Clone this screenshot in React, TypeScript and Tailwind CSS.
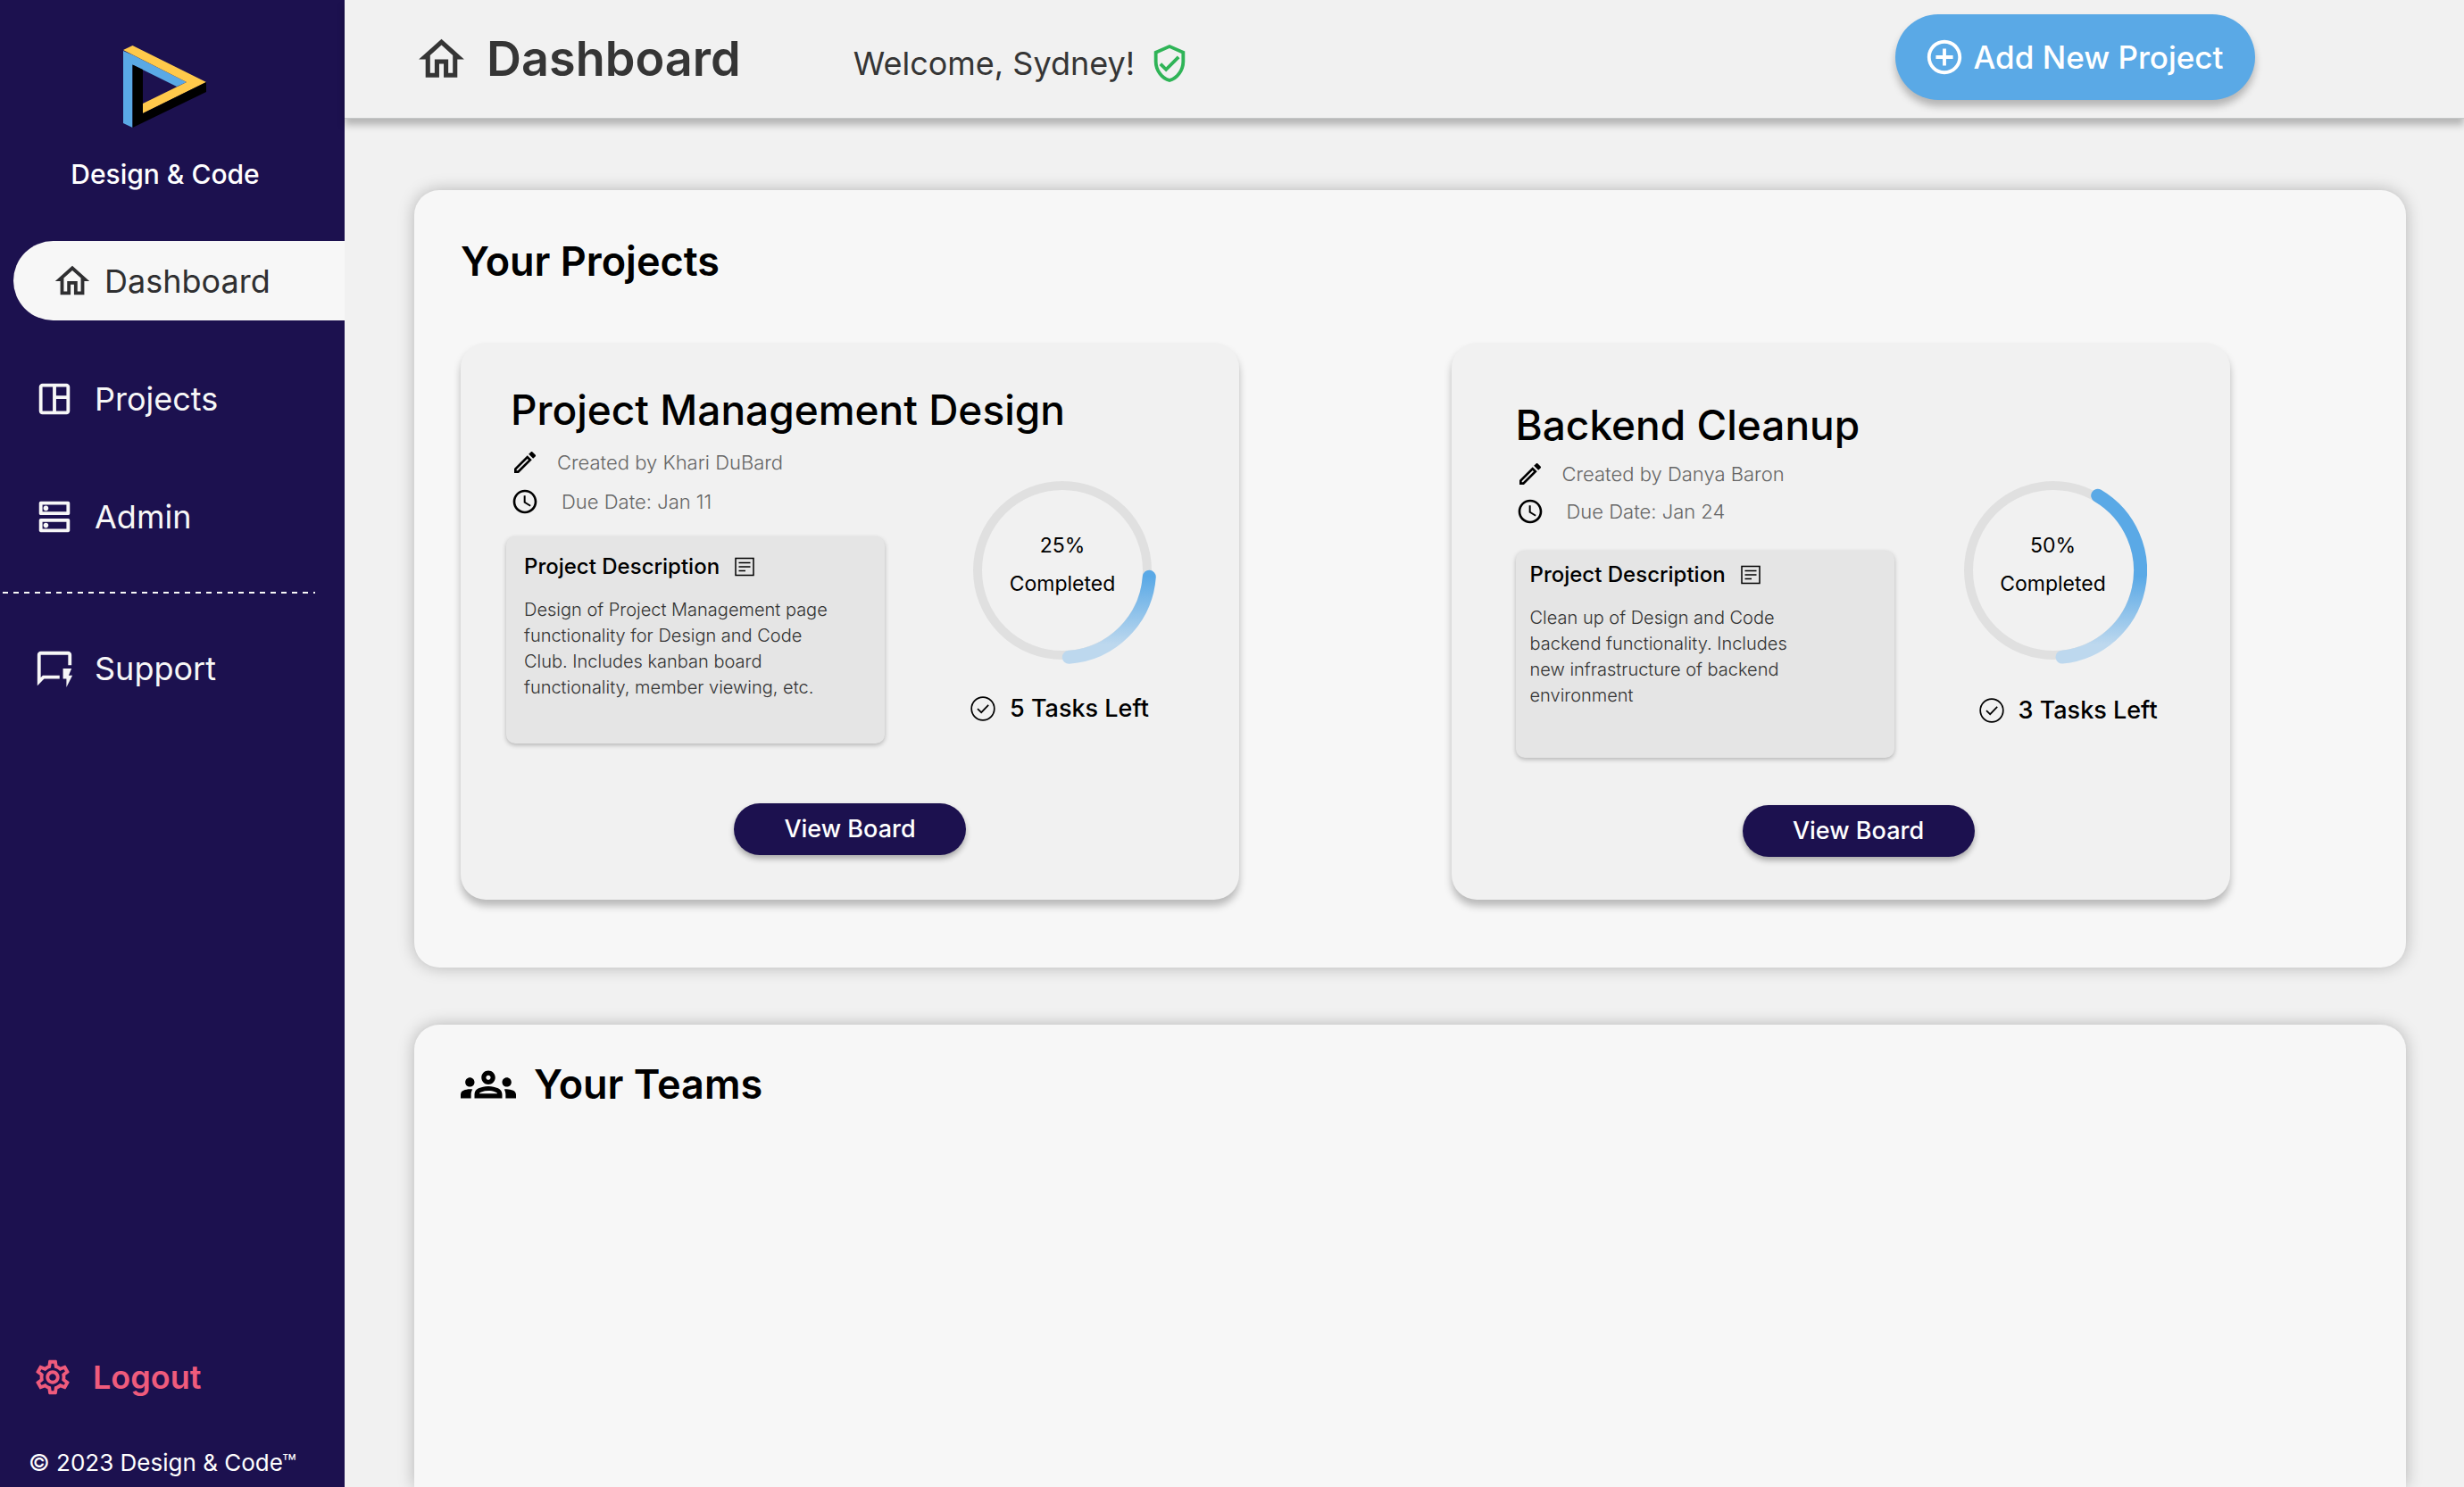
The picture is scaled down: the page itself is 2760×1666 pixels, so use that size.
import type { ReactNode } from 'react';
import {
  MdOutlineHome,
  MdOutlineSpaceDashboard,
  MdOutlineDns,
  MdOutlineQuickreply,
  MdOutlineSettings,
  MdOutlineVerifiedUser,
  MdAddCircleOutline,
  MdOutlineEdit,
  MdSchedule,
  MdOutlineGroups,
} from 'react-icons/md';

function Logo() {
  return (
    <svg className="h-[93px] w-[94px]" viewBox="0 0 94 93" aria-hidden="true">
      <path d="M0 6 10.5 10.5 71 41 60 46 10.5 21.5V92L0 87Z" fill="#5aa9e6" />
      <path d="M0 5 10.5 0 93 41 22 76V65L71 41Z" fill="#ffc94b" />
      <path d="M10.5 21.5 22 27V76L93 41V52L10.5 92Z" fill="#000" />
    </svg>
  );
}

function ArticleIcon() {
  return (
    <svg className="size-6" viewBox="0 0 24 24" fill="none" stroke="currentColor" aria-hidden="true">
      <path d="M2 2.5H22V21.5H2Z" strokeWidth="1.5" />
      <path d="M5.5 7.5H18.5M5.5 12H18.5M5.5 16.5H13" strokeWidth="1.5" />
    </svg>
  );
}

function CheckIcon() {
  return (
    <svg
      className="size-7 shrink-0"
      viewBox="0 0 28 28"
      fill="none"
      stroke="currentColor"
      strokeWidth="1.7"
      aria-hidden="true"
    >
      <circle cx="14" cy="14" r="12.8" />
      <path d="M8 14.2 12.2 18.2 20.2 9.8" />
    </svg>
  );
}

type NavItemProps = { icon: ReactNode; label: string };

function NavItem({ icon, label }: NavItemProps) {
  return (
    <a href="#" className="flex h-[89px] items-center gap-[22px] pl-[38px] text-4xl text-[#f7f7f7]">
      {icon}
      {label}
    </a>
  );
}

function Sidebar() {
  return (
    <aside className="flex w-[386px] shrink-0 flex-col bg-[#1c114f] text-white">
      <div className="flex flex-col items-center pt-[51px] pr-4">
        <Logo />
        <p className="mt-[30px] text-[30px] leading-[42px] font-medium">Design &amp; Code</p>
      </div>
      <nav className="mt-[54px] flex flex-col gap-[43px]">
        <a
          href="#"
          aria-current="page"
          className="ml-[15px] flex h-[89px] items-center gap-[13px] rounded-l-full bg-[#f7f7f7] pl-[43px] text-4xl text-[#2f2f31]"
        >
          <MdOutlineHome className="size-[46px]" />
          Dashboard
        </a>
        <NavItem icon={<MdOutlineSpaceDashboard className="size-[46px]" />} label="Projects" />
        <NavItem icon={<MdOutlineDns className="size-[46px]" />} label="Admin" />
      </nav>
      <div className="mt-10 mr-[33px] ml-[3px] h-[2px] bg-[repeating-linear-gradient(to_right,#f7f7f7_0_6px,transparent_6px_12px)]" />
      <div className="mt-[39px]">
        <NavItem icon={<MdOutlineQuickreply className="size-[46px]" />} label="Support" />
      </div>
      <button
        type="button"
        className="mt-auto flex h-[58px] items-center gap-[22px] pl-9 text-left text-4xl font-semibold text-[#ef5b7c]"
      >
        <MdOutlineSettings className="size-[46px]" />
        Logout
      </button>
      <p className="mt-[49px] mb-[9px] pl-8 text-[26px] leading-9">© 2023 Design &amp; Code™</p>
    </aside>
  );
}

function Header() {
  return (
    <header className="z-10 flex h-[133px] shrink-0 items-center border-b border-[#c4c7c7] bg-[#f1f1f1] pr-[234px] pl-[78px] text-[#353535] shadow-[0_7px_8px_rgba(0,0,0,0.25)]">
      <MdOutlineHome className="size-[61px]" />
      <h1 className="ml-5 text-[54px] leading-[64px] font-semibold">Dashboard</h1>
      <p className="mt-[10px] ml-[126px] flex items-center gap-4 text-4xl whitespace-nowrap">
        Welcome, Sydney!
        <MdOutlineVerifiedUser className="size-[46px] text-[#2fb457]" />
      </p>
      <button
        type="button"
        className="mb-1 ml-auto flex h-24 w-[403px] items-center justify-center gap-[10px] rounded-full bg-[#5aa9e6] pr-1 text-[35px] font-medium whitespace-nowrap text-white shadow-[0_7px_8px_rgba(0,0,0,0.25)]"
      >
        <MdAddCircleOutline className="size-[46px]" />
        Add New Project
      </button>
    </header>
  );
}

type ProgressRingProps = { id: string; percent: number; arc: string };

function ProgressRing({ id, percent, arc }: ProgressRingProps) {
  return (
    <div className="grid size-[210px] place-items-center">
      <svg className="col-start-1 row-start-1 size-[210px]" viewBox="0 0 210 210" fill="none" aria-hidden="true">
        <defs>
          <linearGradient id={id} x1="0" y1="112" x2="0" y2="188" gradientUnits="userSpaceOnUse">
            <stop stopColor="#5aa9e6" />
            <stop offset="1" stopColor="#bdd8ee" />
          </linearGradient>
        </defs>
        <circle cx="105" cy="105" r="95" stroke="#e0e0e0" strokeWidth="10" />
        <path d={arc} stroke={`url(#${id})`} strokeWidth="15" strokeLinecap="round" />
      </svg>
      <p className="col-start-1 row-start-1 pb-3 text-center text-[23px] leading-[43px] text-black">
        {percent}%<br />
        Completed
      </p>
    </div>
  );
}

type Project = {
  id: string;
  title: string;
  author: string;
  due: string;
  description: string;
  percent: number;
  arc: string;
  tasksLeft: number;
  layout: {
    title: string;
    body: string;
    meta: string;
    panel: string;
    side: string;
    tasks: string;
    action: string;
  };
};

const projects: Project[] = [
  {
    id: 'management',
    title: 'Project Management Design',
    author: 'Khari DuBard',
    due: 'Jan 11',
    description:
      'Design of Project Management page functionality for Design and Code Club. Includes kanban board functionality, member viewing, etc.',
    percent: 25,
    arc: 'M112.3 202.3A97.5 97.5 0 0 0 202.3 112.3',
    tasksLeft: 5,
    layout: {
      title: 'mt-12 ml-14',
      body: 'pl-[51px]',
      meta: 'mt-2 mb-[17px] pl-[5px] leading-[44px]',
      panel: 'pt-[14px] pr-[54px] pl-5',
      side: 'pt-[46px]',
      tasks: 'mt-[30px] ml-[2px]',
      action: 'mt-[67px]',
    },
  },
  {
    id: 'backend',
    title: 'Backend Cleanup',
    author: 'Danya Baron',
    due: 'Jan 24',
    description:
      'Clean up of Design and Code backend functionality. Includes new infrastructure of backend environment',
    percent: 50,
    arc: 'M115 202.1A97.5 97.5 0 0 0 154.7 21.2',
    tasksLeft: 3,
    layout: {
      title: 'mt-[65px] ml-[72px]',
      body: 'pl-[72px]',
      meta: 'mt-[5px] mb-[23px] leading-[42px]',
      panel: 'pt-[7px] pr-[88px] pl-4',
      side: 'pt-[29px]',
      tasks: 'mt-8 ml-[22px]',
      action: 'mt-[53px] ml-10',
    },
  },
];

function ProjectCard({ project }: { project: Project }) {
  const { layout } = project;
  return (
    <article className="flex max-w-[872px] flex-col rounded-[28px] bg-[#f1f1f1] pb-12 shadow-[0_7px_8px_rgba(0,0,0,0.25)]">
      <h3 className={`h-14 text-[46px] leading-[54px] font-medium whitespace-nowrap ${layout.title}`}>
        {project.title}
      </h3>
      <div className={`flex items-start justify-between pr-[93px] ${layout.body}`}>
        <div className="w-[424px]">
          <div className={`text-[22px] font-light text-[#666] ${layout.meta}`}>
            <p className="flex items-center gap-5">
              <MdOutlineEdit className="size-8 text-black" />
              Created by {project.author}
            </p>
            <p className="flex items-center gap-[25px]">
              <MdSchedule className="size-8 text-black" />
              Due Date: {project.due}
            </p>
          </div>
          <section className={`h-[232px] rounded-[10px] bg-[#e5e5e5] shadow-[0_2px_5px_rgba(0,0,0,0.25)] ${layout.panel}`}>
            <h4 className="flex items-center gap-4 text-2xl leading-10 font-medium whitespace-nowrap">
              Project Description
              <ArticleIcon />
            </h4>
            <p className="mt-[14px] text-xl leading-[29px] font-light text-[#333]">{project.description}</p>
          </section>
        </div>
        <div className={`w-[210px] ${layout.side}`}>
          <ProgressRing id={`ring-${project.id}`} percent={project.percent} arc={project.arc} />
          <p className={`flex items-center gap-4 text-[27px] leading-10 font-medium whitespace-nowrap ${layout.tasks}`}>
            <CheckIcon />
            {project.tasksLeft} Tasks Left
          </p>
        </div>
      </div>
      <button
        type="button"
        className={`h-[58px] w-[260px] self-center rounded-full bg-[#1c114f] text-[27px] font-medium text-white shadow-[0_4px_6px_rgba(0,0,0,0.3)] ${layout.action}`}
      >
        View Board
      </button>
    </article>
  );
}

export default function App() {
  return (
    <div className="flex min-h-screen bg-[#f1f1f1] font-['Inter',sans-serif] text-black">
      <Sidebar />
      <div className="flex min-w-0 flex-1 flex-col">
        <Header />
        <main className="flex flex-1 flex-col gap-16 pt-20 pr-[65px] pl-[78px]">
          <section className="rounded-[28px] bg-[#f7f7f7] pt-[50px] pb-[76px] pl-[52px] shadow-[0_0_18px_rgba(0,0,0,0.25)]">
            <h2 className="text-[45px] leading-[60px] font-semibold">Your Projects</h2>
            <div className="mt-[61px] grid grid-cols-2 gap-10">
              {projects.map((project) => (
                <ProjectCard key={project.id} project={project} />
              ))}
            </div>
          </section>
          <section className="flex-1 rounded-t-[28px] bg-[#f7f7f7] pt-9 pl-[52px] shadow-[0_0_18px_rgba(0,0,0,0.25)]">
            <h2 className="flex items-center gap-5 text-[45px] leading-[60px] font-semibold">
              <MdOutlineGroups className="size-[62px]" />
              Your Teams
            </h2>
          </section>
        </main>
      </div>
    </div>
  );
}
